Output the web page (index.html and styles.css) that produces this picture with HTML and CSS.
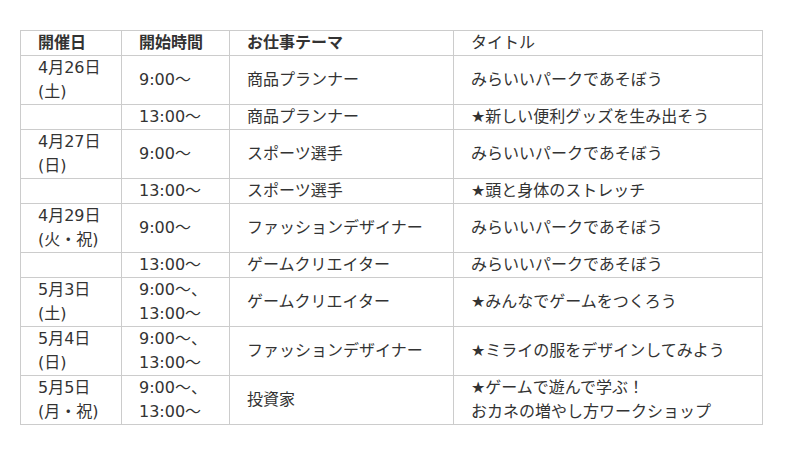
FILE: index.html
```html
<!DOCTYPE html>
<html lang="ja">
<head>
<meta charset="utf-8">
<link rel="stylesheet" href="styles.css">
</head>
<body>
<div class="page">
<table class="schedule">
<colgroup>
<col class="c1"><col class="c2"><col class="c3"><col class="c4">
</colgroup>
<thead>
<tr><th>開催日</th><th>開始時間</th><th>お仕事テーマ</th><th class="light">タイトル</th></tr>
</thead>
<tbody>
<tr><td>4月26日<br>(土)</td><td>9:00〜</td><td>商品プランナー</td><td>みらいいパークであそぼう</td></tr>
<tr><td></td><td>13:00〜</td><td>商品プランナー</td><td>★新しい便利グッズを生み出そう</td></tr>
<tr><td>4月27日<br>(日)</td><td>9:00〜</td><td>スポーツ選手</td><td>みらいいパークであそぼう</td></tr>
<tr><td></td><td>13:00〜</td><td>スポーツ選手</td><td>★頭と身体のストレッチ</td></tr>
<tr><td>4月29日<br>(火・祝)</td><td>9:00〜</td><td>ファッションデザイナー</td><td>みらいいパークであそぼう</td></tr>
<tr><td></td><td>13:00〜</td><td>ゲームクリエイター</td><td>みらいいパークであそぼう</td></tr>
<tr><td>5月3日<br>(土)</td><td>9:00〜、<br>13:00〜</td><td>ゲームクリエイター</td><td>★みんなでゲームをつくろう</td></tr>
<tr><td>5月4日<br>(日)</td><td>9:00〜、<br>13:00〜</td><td>ファッションデザイナー</td><td>★ミライの服をデザインしてみよう</td></tr>
<tr><td>5月5日<br>(月・祝)</td><td>9:00〜、<br>13:00〜</td><td>投資家</td><td>★ゲームで遊んで学ぶ！<br>おカネの増やし方ワークショップ</td></tr>
</tbody>
</table>
</div>
</body>
</html>
```
FILE: styles.css
```css
html, body {
  margin: 0;
  padding: 0;
  background: #fff;
}
.page {
  padding: 30px 0 0 20px;
}
.schedule {
  border-collapse: collapse;
  table-layout: fixed;
  width: 742px;
  font-family: "DejaVu Sans", "Noto Sans CJK JP", sans-serif;
  font-size: 16px;
  line-height: 24px;
  color: #333;
}
.c1 { width: 101px; }
.c2 { width: 108px; }
.c3 { width: 224px; }
.c4 { width: 309px; }
.schedule th,
.schedule td {
  border: 1px solid #ccc;
  padding: 0 0 0 17px;
  text-align: left;
  vertical-align: middle;
  white-space: nowrap;
}
.schedule th {
  font-weight: bold;
}
.schedule th.light {
  font-weight: normal;
}
```
